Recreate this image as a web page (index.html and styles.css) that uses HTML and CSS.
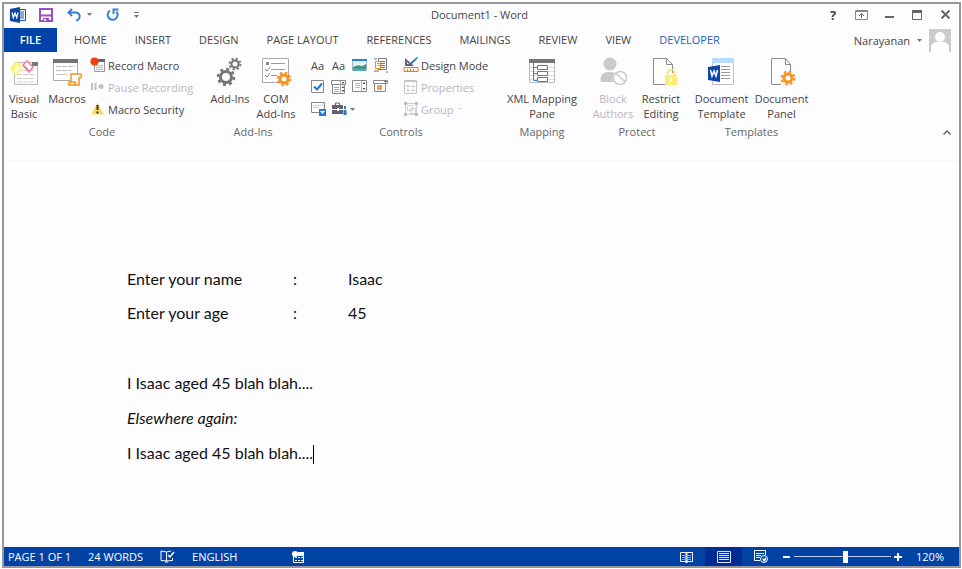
FILE: index.html
```html
<!DOCTYPE html>
<html lang="en">
<head>
  <meta charset="UTF-8">
  <title>Document1 - Word</title>
  <meta name="viewport" content="width=device-width, initial-scale=1.0">
  <link rel="stylesheet" href="styles.css">
</head>
<body>
<div class="window">

  <header class="titlebar">
    <div class="quick-access">
      <svg class="app-icon" width="16" height="16" viewBox="0 0 16 16"><path d="M9 2.500h6.500v11H9z" fill="#fff" stroke="#1a52ad"/><path d="M10 5h4M10 7h4M10 9h4M10 11h4" stroke="#1a52ad"/><path d="M0 2l10-2v16L0 14z" fill="#0c47a5"/><path d="M2 5.500l1.300 5L5 6l1.700 4.500L8 5.500" fill="none" stroke="#fff" stroke-width="1.300"/></svg>
      <button class="qa-btn" aria-label="Save"><svg width="14" height="14" viewBox="0 0 14 14"><path d="M1 1h12v12H1z" fill="#fff" stroke="#9a50c0" stroke-width="2"/><path d="M2 7.500h10" stroke="#9a50c0" stroke-width="2"/><path d="M4 10h6v3H4z" fill="#9a50c0"/><path d="M5 11h2v2H5z" fill="#fff"/></svg></button>
      <button class="qa-btn" aria-label="Undo"><svg width="14" height="14" viewBox="0 0 14 14"><path d="M5 1L1.500 4.500 5 8M2 4.500h6c6 0 6 7 1 8" fill="none" stroke="#3482d2" stroke-width="2"/></svg></button>
      <button class="qa-more" aria-label="Undo list"><svg width="5" height="3"><path d="M0 0h5L2.500 3z" fill="#777"/></svg></button>
      <button class="qa-btn" aria-label="Repeat"><svg width="14" height="14" viewBox="0 0 14 14"><path d="M4 2.500A5 5 0 1 0 10.500 3.500" fill="none" stroke="#3482d2" stroke-width="2"/><path d="M7.500 6V1.500H12.500" fill="none" stroke="#3482d2" stroke-width="2"/></svg></button>
      <button class="qa-more" aria-label="Customize"><svg width="5" height="6"><path d="M0 .5h5" stroke="#777"/><path d="M0 3h5L2.500 6z" fill="#777"/></svg></button>
    </div>
    <div class="title">Document1 - Word</div>
    <div class="window-buttons">
      <button class="help" aria-label="Help">?</button>
      <button aria-label="Ribbon display options"><svg width="13" height="10" viewBox="0 0 13 10"><path d="M.5.500h12v9H.5z" fill="none" stroke="#888"/><path d="M1 1.500h11" stroke="#888"/><path d="M6.500 8V4M4 6l2.500-2.500L9 6" fill="none" stroke="#666"/></svg></button>
      <button aria-label="Minimize"><svg width="9" height="10"><path d="M0 7h9" stroke="#666" stroke-width="2"/></svg></button>
      <button aria-label="Maximize"><svg width="10" height="10"><path d="M.5.500h9v9H.5z" fill="none" stroke="#666"/><path d="M0 1.500h10" stroke="#666" stroke-width="3"/></svg></button>
      <button aria-label="Close"><svg width="9" height="9"><path d="M.5.500l8 8M8.500.500l-8 8" stroke="#666" stroke-width="2"/></svg></button>
    </div>
  </header>

  <nav class="tabs">
    <button class="file-tab">FILE</button>
    <button class="tab">HOME</button>
    <button class="tab">INSERT</button>
    <button class="tab">DESIGN</button>
    <button class="tab">PAGE LAYOUT</button>
    <button class="tab">REFERENCES</button>
    <button class="tab">MAILINGS</button>
    <button class="tab">REVIEW</button>
    <button class="tab">VIEW</button>
    <button class="tab active">DEVELOPER</button>
    <button class="account">Narayanan
      <svg width="5" height="3"><path d="M0 0h5L2.500 3z" fill="#777"/></svg>
      <svg class="avatar" width="22" height="23" viewBox="0 0 22 23"><path d="M0 0h22v23H0z" fill="#cdcacd"/><circle cx="11" cy="8" r="5" fill="#fff"/><path d="M2 23v-4c0-4 3-6 6-6h6c3 0 6 2 6 6v4z" fill="#fff"/></svg>
    </button>
  </nav>

  <section class="ribbon">
    <div class="group code">
      <div class="group-body">
        <button class="large narrow">
          <svg width="32" height="32" viewBox="0 0 32 32"><path d="M6.500 5.500h23v22h-23z" fill="#fff" stroke="#bbb8bb"/><path d="M24 5h6v4h-6z" fill="#777"/><path d="M9 13.500h18M9 17.500h18M9 21.500h18M9 25h18" stroke="#ccc" stroke-dasharray="5 1"/><path d="M8 4l7 6-7 9-6-7z" fill="#fff36b"/><path d="M9 8l4 2-5 7-2-3z" fill="#fffbc9"/><path d="M19 4l6 6-4 5-6-7z" fill="#fff" stroke="#f17d9c" stroke-width="1.500"/><path d="M16 9l5 5" stroke="#f17d9c" stroke-width="2"/></svg>
          <span>Visual<br>Basic</span>
        </button>
        <button class="large">
          <svg width="32" height="32" viewBox="0 0 32 32"><path d="M2.500 3.500h24v20h-24z" fill="#fff" stroke="#aaa"/><path d="M2 2h25v4H2z" fill="#777378"/><path d="M5 9.500h19M5 13.500h15M5 17.500h12" stroke="#bbb" stroke-dasharray="5 1"/><path d="M20 17h9c2 0 2 4 0 4h-1v7h-9c-2 0-2-3 0-3h1z" fill="#fff" stroke="#f7931e" stroke-width="1.500"/><path d="M20 25h5c-2 1-1 3 0 3" fill="none" stroke="#f7931e" stroke-width="1.500"/></svg>
          <span>Macros</span>
        </button>
        <div class="small-list">
          <button class="small"><svg width="16" height="16" viewBox="0 0 16 16"><path d="M4.500 3.500h10v11h-10z" fill="#fff" stroke="#999"/><path d="M8 2h7v3H8z" fill="#666"/><path d="M6 8.500h7M6 10.500h7M6 12.500h7" stroke="#bbb"/><circle cx="4.500" cy="4.500" r="4" fill="#f4420f"/></svg>Record Macro</button>
          <button class="small" disabled><svg width="16" height="16" viewBox="0 0 16 16"><path d="M2 4v7M5.500 4v7" stroke="#c3bfc3" stroke-width="2"/><circle cx="11" cy="7.500" r="2.500" fill="#c3bfc3"/></svg>Pause Recording</button>
          <button class="small"><svg width="16" height="16" viewBox="0 0 16 16"><path d="M7.500 1.500l6.500 12H1z" fill="#fddc63"/><path d="M7.500 4v5M7.500 10.500v2" stroke="#333" stroke-width="2"/></svg>Macro Security</button>
        </div>
      </div>
      <div class="group-label">Code</div>
    </div>

    <div class="group addins">
      <div class="group-body">
        <button class="large">
          <svg width="32" height="32" viewBox="0 0 32 32"><g fill="none" stroke="#777378"><circle cx="12" cy="20" r="5.500" stroke-width="3"/><circle cx="12" cy="20" r="8" stroke-width="2.500" stroke-dasharray="3 3.280"/><circle cx="21" cy="7" r="3.500" stroke-width="2"/><circle cx="21" cy="7" r="5.400" stroke-width="2" stroke-dasharray="2.120 2.120"/></g></svg>
          <span>Add-Ins</span>
        </button>
        <button class="large">
          <svg width="32" height="32" viewBox="0 0 32 32"><path d="M2.500 1.500h26v24h-26z" fill="#fff" stroke="#aaa"/><path d="M11 6.500h14M11 12.500h14M11 18.500h6" stroke="#999"/><path d="M6 5h3v3H6z" fill="#888"/><path d="M5 12l2 2 3-4M5 18l2 2 3-4" fill="none" stroke="#888"/><circle cx="24" cy="22" r="4" fill="#fff" stroke="#f7931e" stroke-width="3"/><circle cx="24" cy="22" r="6.400" fill="none" stroke="#f7931e" stroke-width="2" stroke-dasharray="2.500 2.530"/></svg>
          <span>COM<br>Add-Ins</span>
        </button>
      </div>
      <div class="group-label">Add-Ins</div>
    </div>

    <div class="group controls">
      <div class="group-body">
        <div class="control-grid">
          <button aria-label="Rich text">Aa</button>
          <button aria-label="Plain text">Aa</button>
          <button aria-label="Picture"><svg width="16" height="16" viewBox="0 0 16 16"><path d="M.5 2.500h14v11H.5z" fill="#d5efff" stroke="#aac"/><path d="M0 2h15v2H0z" fill="#2f7fd0"/><path d="M1 9l5-2 3 1 5-3v4H1z" fill="#fff"/><path d="M1 10l5-2 4 1 4-2v6H1z" fill="#49997f"/><path d="M1 12h13v2H1z" fill="#54a6d6"/></svg></button>
          <button aria-label="Building block"><svg width="16" height="16" viewBox="0 0 16 16"><path d="M5.500 1.500h8v11h-8z" fill="#fff" stroke="#777"/><path d="M7 4.500h5M7 6.500h5M7 8.500h5M7 10.500h5" stroke="#777"/><path d="M2.500 4.500h5v7h-5z" fill="#fff" stroke="#ed8a24"/><path d="M4 6.500h3M4 8.500h3" stroke="#ed8a24"/><path d="M1 2h3M1 14h5M13 15h2" stroke="#666"/></svg></button>
          <button aria-label="Check box"><svg width="16" height="16" viewBox="0 0 16 16"><path d="M1.500 1.500h12v12h-12z" fill="#fff" stroke="#888"/><path d="M4 7.500l3 3 5-6" fill="none" stroke="#2575d0" stroke-width="2"/></svg></button>
          <button aria-label="Combo box"><svg width="16" height="16" viewBox="0 0 16 16"><path d="M.5 1.500h14v4H.5zM1.500 5.500h12v9h-12z" fill="#fff" stroke="#888"/><path d="M9.500 2v12M3 8.500h5M3 10.500h5M3 12.500h5" stroke="#aaa"/><path d="M10.500 3h3L12 5zM10.500 9h3L12 7zM10.500 11h3L12 13z" fill="#555"/></svg></button>
          <button aria-label="Drop-down list"><svg width="16" height="16" viewBox="0 0 16 16"><path d="M.5 1.500h14v11H.5z" fill="#fff" stroke="#888"/><path d="M9.500 2v10M3 4.500h5M3 6.500h5M3 8.500h5" stroke="#bbb"/><path d="M10.500 5h3L12 3zM10.500 9h3L12 11z" fill="#555"/></svg></button>
          <button aria-label="Date picker"><svg width="16" height="16" viewBox="0 0 16 16"><path d="M.5 1.500h14v3H.5zM1.500 4.500h11v8h-11z" fill="#fff" stroke="#888"/><path d="M5 7h3v3H5z" fill="#fff" stroke="#ed7c24" stroke-width="1.500"/><path d="M11 2h3l-1.500 2z" fill="#555"/></svg></button>
          <button aria-label="Repeating section"><svg width="16" height="16" viewBox="0 0 16 16"><path d="M1.500 1.500h13v10h-13z" fill="#fff" stroke="#888"/><path d="M3 4.500h10M3 6.500h6" stroke="#ccc"/><path d="M9 8h7v7H9z" fill="#2878ce"/><path d="M10 10h5l-2.500 3z" fill="#fff"/></svg></button>
          <button aria-label="Legacy tools"><svg width="16" height="16" viewBox="0 0 16 16"><path d="M1 4h11v4H1zM1 9h11v4H1z" fill="#666268"/><path d="M4.500 4V2h4v2" fill="none" stroke="#666268"/><path d="M6 7h2v3H6z" fill="#fff"/><path d="M13 5h2v3h-2zM12.500 9h3v5h-3z" fill="#2878ce"/></svg></button>
          <button class="more" aria-label="Legacy tools list"><svg width="5" height="3"><path d="M0 0h5L2.500 3z" fill="#777"/></svg></button>
        </div>
        <div class="small-list tight">
          <button class="small"><svg width="16" height="16" viewBox="0 0 16 16"><path d="M2 1v8h9z" fill="#666268"/><path d="M4 5v2h2z" fill="#fff"/><path d="M7 8l1-3 6-5 1 1-6 6z" fill="#2878ce"/><path d="M1 10.500h14v4H1z" fill="#fff3dd" stroke="#e98019"/><path d="M4.500 12v2M7.500 12v2M10.500 12v2" stroke="#e98019"/></svg>Design Mode</button>
          <button class="small" disabled><svg width="16" height="16" viewBox="0 0 16 16"><path d="M1.500 1.500h12v13h-12z" fill="none" stroke="#c8c4c8"/><path d="M1 2.500h13" stroke="#c8c4c8"/><path d="M4 6h2v2H4zM4 10h2v2H4z" fill="#c8c4c8"/><path d="M8 7.500h4M8 11.500h4" stroke="#c8c4c8"/></svg>Properties</button>
          <button class="small" disabled><svg width="16" height="16" viewBox="0 0 16 16"><path d="M2.500 2.500h11v11h-11zM4.500 4.500h5v5h-5zM7.500 7.500h5v5h-5z" fill="none" stroke="#d4d0d4"/><path d="M1 1h3v3H1zM12 1h3v3h-3zM1 12h3v3H1zM12 12h3v3h-3z" fill="#c0bcc0"/></svg>Group<svg class="dot" width="3" height="2"><path d="M0 0h3v1H0z" fill="#ccc"/></svg></button>
        </div>
      </div>
      <div class="group-label">Controls</div>
    </div>

    <div class="group mapping">
      <div class="group-body">
        <button class="large wide">
          <svg width="32" height="32" viewBox="0 0 32 32"><path d="M3.500 2.500h25v23h-25z" fill="#fff" stroke="#bbb"/><path d="M3 2h26v4H3z" fill="#777378"/><path d="M4 10.500h24M4 14.500h24M4 18.500h24M4 22.500h24" stroke="#ddd"/><path d="M7.500 2v21.500H11M7.500 10.500H11M7.500 16.500H11" fill="none" stroke="#3482d2"/><path d="M11.500 8.500h10v4h-10zM11.500 14.500h10v4h-10zM11.500 20.500h10v4h-10z" fill="#fff" stroke="#3482d2"/></svg>
          <span>XML Mapping<br>Pane</span>
        </button>
      </div>
      <div class="group-label">Mapping</div>
    </div>

    <div class="group protect">
      <div class="group-body">
        <button class="large" disabled>
          <svg width="32" height="32" viewBox="0 0 32 32"><circle cx="13" cy="7" r="6.500" fill="#cbc8cb"/><path d="M4 25c-2-6 2-10 8-10 5 0 8 1 9 3l-4 7z" fill="#cbc8cb"/><circle cx="23" cy="21" r="7.500" fill="#fdfcfe"/><circle cx="23" cy="21" r="6.500" fill="#fff" stroke="#cbc8cb" stroke-width="1.500"/><path d="M19 16l9 9" stroke="#cbc8cb" stroke-width="1.500"/></svg>
          <span>Block<br>Authors</span>
        </button>
        <button class="large">
          <svg width="32" height="32" viewBox="0 0 32 32"><path d="M8.500 1.500h13l6 6v20h-19z" fill="#fff"/><path d="M20 27.500H8.500v-26h13l6 6V16M21.500 1.500v6h6" fill="none" stroke="#8c888c"/><path d="M22.500 19v-3c0-4 7-4 7 0v3" fill="none" stroke="#f7df62" stroke-width="1.500"/><path d="M20 18h12v10H20z" fill="#ffec74"/><path d="M26 21v4" stroke="#fff" stroke-width="2"/></svg>
          <span>Restrict<br>Editing</span>
        </button>
      </div>
      <div class="group-label">Protect</div>
    </div>

    <div class="group templates">
      <div class="group-body">
        <button class="large wide">
          <svg width="32" height="32" viewBox="0 0 32 32"><path d="M6.500 1.500h21v26h-21z" fill="#fff" stroke="#c3c0c3"/><path d="M6 1h22v5H6z" fill="#b5dcfb"/><path d="M15 9.500h9M15 12.500h9M15 15.500h9M15 18.500h9M15 21.500h9" stroke="#999"/><path d="M2 10l12-2v17L2 23z" fill="#0c47a5"/><path d="M4.500 13l1.500 6 2-5 2 5 1.500-6" fill="none" stroke="#fff" stroke-width="1.500"/></svg>
          <span>Document<br>Template</span>
        </button>
        <button class="large wide">
          <svg width="32" height="32" viewBox="0 0 32 32"><path d="M15 27.500H5.500v-26h14l5 6V15M19.500 1.500v6h5" fill="none" stroke="#8c888c"/><circle cx="22" cy="21" r="4" fill="#fff" stroke="#f7931e" stroke-width="3"/><circle cx="22" cy="21" r="6.400" fill="none" stroke="#f7931e" stroke-width="2" stroke-dasharray="2.500 2.530"/></svg>
          <span>Document<br>Panel</span>
        </button>
      </div>
      <div class="group-label">Templates</div>
    </div>

    <button class="collapse" aria-label="Collapse the ribbon"><svg width="8" height="5"><path d="M.5 4.500L4 1l3.500 3.500" fill="none" stroke="#666" stroke-width="1.500"/></svg></button>
  </section>

  <main class="document">
    <div class="entry"><span>Enter your name</span><span>:</span><span>Isaac</span></div>
    <div class="entry"><span>Enter your age</span><span>:</span><span>45</span></div>
    <p><br></p>
    <p>I Isaac aged 45 blah blah....</p>
    <p><em>Elsewhere again:</em></p>
    <p>I Isaac aged 45 blah blah....<span class="caret"></span></p>
  </main>

  <footer class="statusbar">
    <span>PAGE 1 OF 1</span>
    <span>24 WORDS</span>
    <button aria-label="Proofing"><svg width="15" height="13" viewBox="0 0 15 13"><path d="M6.500 2L1 1v9.500l5.500.500zM6.500 2L11 1M6.500 11l6-.500V8M5 12h3" fill="none" stroke="#fff"/><path d="M8 5l2 2 4-5" fill="none" stroke="#fff" stroke-width="1.500"/></svg></button>
    <span>ENGLISH</span>
    <button class="macro-btn" aria-label="Record macro"><svg width="13" height="12" viewBox="0 0 13 12"><path d="M1.500 4.500h10v7h-10z" fill="none" stroke="#fff"/><path d="M6 1h6v3H6z" fill="#fff"/><path d="M3 6.500h8M3 9.500h8" stroke="#fff" stroke-dasharray="2 1"/><circle cx="3" cy="3" r="3" fill="#fff"/></svg></button>
    <div class="views">
      <button class="view" aria-label="Read mode"><svg width="13" height="12" viewBox="0 0 13 12"><path d="M.5 1.500h12v9H.5z" fill="none" stroke="#fff"/><path d="M6.500 1v11" stroke="#fff" stroke-width="2"/><path d="M2 4.500h9M2 6.500h9M2 8.500h9" stroke="#8faadb"/></svg></button>
      <button class="view current" aria-label="Print layout"><svg width="14" height="12" viewBox="0 0 14 12"><path d="M.5.500h13v11H.5z" fill="none" stroke="#dce6f7"/><path d="M2 2.500h10M2 4.500h10M2 6.500h10M2 8.500h10" stroke="#dce6f7"/></svg></button>
      <button class="view" aria-label="Web layout"><svg width="14" height="13" viewBox="0 0 14 13"><path d="M6 10.500H.5V.500h11V5M2 3.500h8M2 5.500h5M2 7.500h4" fill="none" stroke="#fff"/><circle cx="10" cy="9" r="3.500" fill="#0143a5" stroke="#fff"/><path d="M8 8l2 1 2-2v3l-2 2z" fill="#fff"/></svg></button>
    </div>
    <div class="zoom">
      <button aria-label="Zoom out"><svg width="8" height="8"><path d="M0 4h7" stroke="#fff" stroke-width="2"/></svg></button>
      <input type="range" min="0" max="100" value="53" aria-label="Zoom">
      <button aria-label="Zoom in"><svg width="8" height="8"><path d="M0 4h8M4 0v8" stroke="#fff" stroke-width="2"/></svg></button>
    </div>
    <span class="percent">120%</span>
  </footer>

</div>
</body>
</html>
```
FILE: styles.css
```css
* {
  box-sizing: border-box;
}

body {
  margin: 0;
  padding: 2px 1px 1px 2px;
  background: #fff;
  color: #444;
  font-family: "Open Sans", "Noto Sans", sans-serif;
  font-size: 11px;
}

button {
  margin: 0;
  padding: 0;
  border: none;
  background: none;
  color: inherit;
  font: inherit;
}

svg {
  display: block;
  flex: none;
}

.window {
  display: flex;
  flex-direction: column;
  min-height: calc(100vh - 3px);
  border: 2px solid #98969b;
  background: #fdfcfe;
}

/* title bar */
.titlebar {
  display: grid;
  grid-template-columns: 1fr auto 1fr;
  align-items: center;
  height: 24px;
  padding-bottom: 3px;
}

.quick-access {
  display: flex;
  align-items: center;
  padding-left: 6px;
}

.title {
  padding-right: 4px;
}

.app-icon {
  margin-right: 13px;
}

.qa-btn {
  margin-right: 6px;
}

.qa-btn + .qa-btn {
  margin-left: 8px;
}

.qa-more {
  margin-right: 14px;
}

.qa-more:last-child {
  margin-left: 8px;
}

.window-buttons {
  display: flex;
  justify-content: flex-end;
}

.window-buttons button {
  display: flex;
  align-items: center;
  justify-content: center;
  width: 28px;
  height: 21px;
}

.window-buttons .help {
  font-size: 13px;
  font-weight: bold;
}

/* tabs */
.tabs {
  display: flex;
  height: 24px;
}

.file-tab,
.tab {
  padding: 0 14px 2px;
}

.file-tab {
  width: 53px;
  margin-right: 3px;
  background: #0143a9;
  color: #fff;
  font-weight: 600;
}

.tab.active {
  color: #1f5fb8;
}

.account {
  display: flex;
  align-items: center;
  gap: 7px;
  margin-left: auto;
  padding-right: 8px;
}

/* ribbon */
.ribbon {
  display: flex;
  height: 109px;
  padding-top: 2px;
  border-bottom: 1px solid #f8f7fa;
}

.group {
  flex: none;
}

.group-body {
  display: flex;
  justify-content: center;
  height: 70px;
}

.group-label {
  color: #666;
  line-height: 16px;
  text-align: center;
}

.code {
  width: 196px;
}

.addins {
  width: 106px;
}

.controls {
  width: 190px;
}

.mapping {
  width: 92px;
}

.protect {
  width: 98px;
}

.templates {
  width: 131px;
}

.code .group-body,
.controls .group-body {
  justify-content: flex-start;
}

.large {
  display: flex;
  flex-direction: column;
  align-items: center;
  width: 46px;
  padding-top: 3px;
  line-height: 15px;
  white-space: nowrap;
}

.large span {
  padding-top: 2px;
}

.large.narrow {
  width: 40px;
}

.large.wide {
  width: 60px;
}

.protect .large {
  width: 48px;
}

.small {
  display: flex;
  align-items: center;
  gap: 2px;
  height: 22px;
  white-space: nowrap;
}

button:disabled {
  color: #bbb8bb;
}

.dot {
  margin-left: 3px;
}

.control-grid {
  display: grid;
  grid-template-columns: repeat(4, 21px);
  grid-auto-rows: 22px;
  padding-left: 1px;
}

.control-grid button {
  display: flex;
  align-items: center;
  justify-content: center;
}

.control-grid .more {
  justify-content: flex-start;
  padding-left: 1px;
}

.small-list.tight {
  padding-left: 12px;
}

.collapse {
  align-self: flex-start;
  margin-left: auto;
  padding: 76px 8px 0 0;
}

/* document */
.document {
  flex: 1;
  padding: 101px 123px 0;
  color: #111;
  font-family: Lato, sans-serif;
  font-size: 16px;
}

.document p {
  margin: 0;
  line-height: 35px;
}

.entry {
  display: grid;
  grid-template-columns: 166px 55px 1fr;
  line-height: 34px;
}

.caret {
  display: inline-block;
  height: 19px;
  border-left: 1px solid #000;
  vertical-align: middle;
}

/* status bar */
.statusbar {
  display: flex;
  align-items: center;
  height: 19px;
  padding: 0 15px 0 4px;
  background: #0143a5;
  color: #fff;
}

.statusbar > span,
.statusbar > button {
  margin-right: 17px;
}

.statusbar > .macro-btn {
  margin-left: 38px;
}

.views {
  display: flex;
  align-self: stretch;
  margin-left: auto;
}

.view {
  display: flex;
  align-items: center;
  justify-content: center;
  width: 37px;
}

.view.current {
  background: #002c93;
}

.zoom {
  display: flex;
  align-items: center;
  gap: 3px;
  padding: 0 14px 0 4px;
}

.zoom input {
  width: 97px;
  height: 12px;
  margin: 0;
  background: none;
  appearance: none;
}

.zoom input::-webkit-slider-runnable-track {
  height: 12px;
  background: linear-gradient(#b9c9e8, #b9c9e8) center / 100% 1px no-repeat;
}

.zoom input::-webkit-slider-thumb {
  width: 5px;
  height: 12px;
  background: #fff;
  appearance: none;
}

.statusbar > .percent {
  margin-right: 0;
}
```
